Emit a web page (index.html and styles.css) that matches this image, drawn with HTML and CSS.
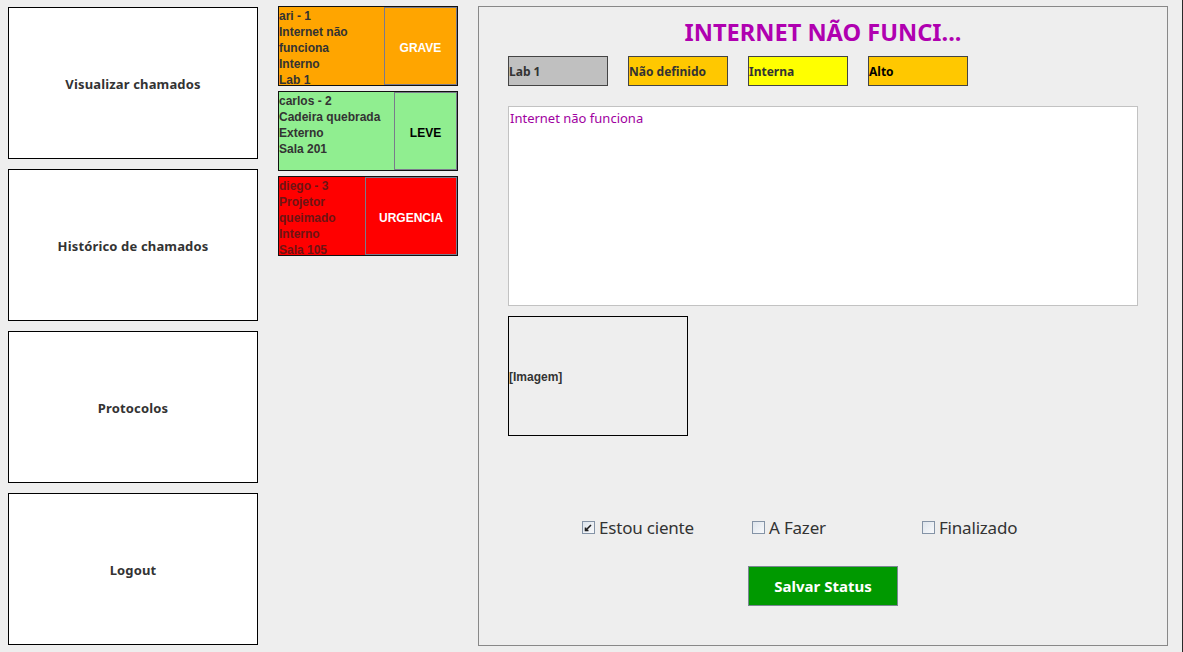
FILE: index.html
```html
<!DOCTYPE html>
<html lang="pt">
<head>
<meta charset="utf-8">
<title>Chamados</title>
<link rel="stylesheet" href="styles.css">
</head>
<body>
<div class="app">
  <nav class="menu">
    <button class="menu-btn">Visualizar chamados</button>
    <button class="menu-btn">Histórico de chamados</button>
    <button class="menu-btn">Protocolos</button>
    <button class="menu-btn">Logout</button>
  </nav>

  <section class="cards">
    <div class="card card-grave">
      <div class="card-text">ari - 1<br>Internet não funciona<br>Interno<br>Lab 1</div>
      <div class="card-level level-grave">GRAVE</div>
    </div>
    <div class="card card-leve">
      <div class="card-text">carlos - 2<br>Cadeira quebrada<br>Externo<br>Sala 201</div>
      <div class="card-level level-leve">LEVE</div>
    </div>
    <div class="card card-urg">
      <div class="card-text">diego - 3<br>Projetor queimado<br>Interno<br>Sala 105</div>
      <div class="card-level level-urg">URGENCIA</div>
    </div>
  </section>

  <main class="detail">
    <h1 class="title">INTERNET NÃO FUNCI...</h1>
    <div class="tags">
      <div class="tag tag-gray">Lab 1</div>
      <div class="tag tag-orange">Não definido</div>
      <div class="tag tag-yellow">Interna</div>
      <div class="tag tag-orange tag-dark">Alto</div>
    </div>
    <div class="desc">Internet não funciona</div>
    <div class="image-box">[Imagem]</div>
    <div class="status-row">
      <label class="check"><span class="box checked"><svg viewBox="0 0 13 13" width="13" height="13"><path d="M3.5 6.5 L3.5 9.5 L6.5 9.5 M3.8 9.2 L9 4" stroke="#1e1e1e" stroke-width="1.6" fill="none"/></svg></span>Estou ciente</label>
      <label class="check"><span class="box"></span>A Fazer</label>
      <label class="check"><span class="box"></span>Finalizado</label>
    </div>
    <div class="actions">
      <button class="save-btn">Salvar Status</button>
    </div>
  </main>
</div>
</body>
</html>
```

FILE: styles.css
```css
html, body {
  margin: 0;
  padding: 0;
  background: #eeeeee;
}

.app {
  width: 1183px;
  height: 652px;
  box-sizing: border-box;
  border-right: 1px solid #2a2a2a;
  display: flex;
  align-items: flex-start;
  font-family: "Liberation Sans", Arial, sans-serif;
}

/* Left menu */
.menu {
  display: flex;
  flex-direction: column;
  gap: 10px;
  padding: 7px 0 0 8px;
}

.menu-btn {
  width: 250px;
  height: 152px;
  box-sizing: border-box;
  border: 1px solid #000;
  background: #fff;
  font-family: "Noto Sans", sans-serif;
  font-weight: bold;
  font-size: 13px;
  letter-spacing: 0.15px;
  color: #333;
  padding: 2px 0 0;
  margin: 0;
}

/* Cards column */
.cards {
  display: flex;
  flex-direction: column;
  gap: 5px;
  margin: 6px 0 0 20px;
  width: 180px;
}

.card {
  height: 80px;
  box-sizing: border-box;
  border: 1px solid #111;
  display: flex;
  overflow: hidden;
}

.card-text {
  flex: 1;
  font-size: 12px;
  font-weight: bold;
  line-height: 16px;
  color: #333;
  padding: 1px 0 0 0;
  overflow: hidden;
}

.card-level {
  box-sizing: border-box;
  border: 1px solid #7a7a8c;
  display: flex;
  align-items: center;
  justify-content: center;
  padding-top: 3px;
  font-size: 12px;
  font-weight: bold;
}

.card-grave { background: #ffa500; }
.card-leve { background: #90ee90; }
.card-urg { background: #ff0000; }
.card-urg .card-text { color: #6e1414; }

.level-grave { width: 73px; color: #fff; }
.level-leve { width: 63px; color: #000; }
.level-urg { width: 92px; color: #fff; }

/* Detail panel */
.detail {
  width: 690px;
  height: 640px;
  box-sizing: border-box;
  border: 1px solid #888;
  margin: 6px 0 0 20px;
  display: flex;
  flex-direction: column;
  padding: 0 0 0 29px;
}

.title {
  margin: 10px 0 0 -29px;
  height: 30px;
  line-height: 30px;
  text-align: center;
  font-family: "Noto Sans", sans-serif;
  font-size: 23.6px;
  font-weight: bold;
  color: #b000b0;
}

.tags {
  display: flex;
  gap: 20px;
  margin-top: 9px;
}

.tag {
  width: 100px;
  height: 30px;
  box-sizing: border-box;
  border: 1px solid #444;
  display: flex;
  align-items: center;
  padding-left: 0;
  font-family: "Noto Sans", sans-serif;
  font-size: 12px;
  font-weight: bold;
  color: #333;
}

.tag-gray { background: #c0c0c0; }
.tag-orange { background: #ffc800; }
.tag-yellow { background: #ffff00; }
.tag-dark { color: #000; }

.desc {
  margin-top: 20px;
  width: 630px;
  height: 200px;
  box-sizing: border-box;
  border: 1px solid #c2c2c2;
  background: #fff;
  padding: 2px 0 0 1px;
  font-family: "Noto Sans", sans-serif;
  font-size: 13px;
  color: #a000a0;
}

.image-box {
  margin-top: 10px;
  width: 180px;
  height: 120px;
  box-sizing: border-box;
  border: 1px solid #000;
  display: flex;
  align-items: center;
  padding-top: 2px;
  font-size: 12px;
  font-weight: bold;
  color: #333;
}

.status-row {
  display: flex;
  margin: 80px 0 0 74px;
}

.check {
  width: 170px;
  display: flex;
  align-items: center;
  font-family: "Noto Sans", sans-serif;
  font-size: 17px;
  letter-spacing: -0.2px;
  color: #333;
}

.box {
  width: 13px;
  height: 13px;
  box-sizing: border-box;
  border: 1px solid #8493a6;
  background: linear-gradient(135deg, #dde4ec, #f8f9fb);
  margin-right: 4px;
  position: relative;
  display: inline-block;
}

.box svg {
  position: absolute;
  left: -1px;
  top: -1px;
}

.actions {
  margin: 27px 0 0 240px;
}

.save-btn {
  width: 150px;
  height: 40px;
  box-sizing: border-box;
  border: 1px solid #7a8692;
  background: #009900;
  color: #fff;
  font-family: "Noto Sans", sans-serif;
  font-size: 15px;
  font-weight: bold;
  padding: 0;
}
```
